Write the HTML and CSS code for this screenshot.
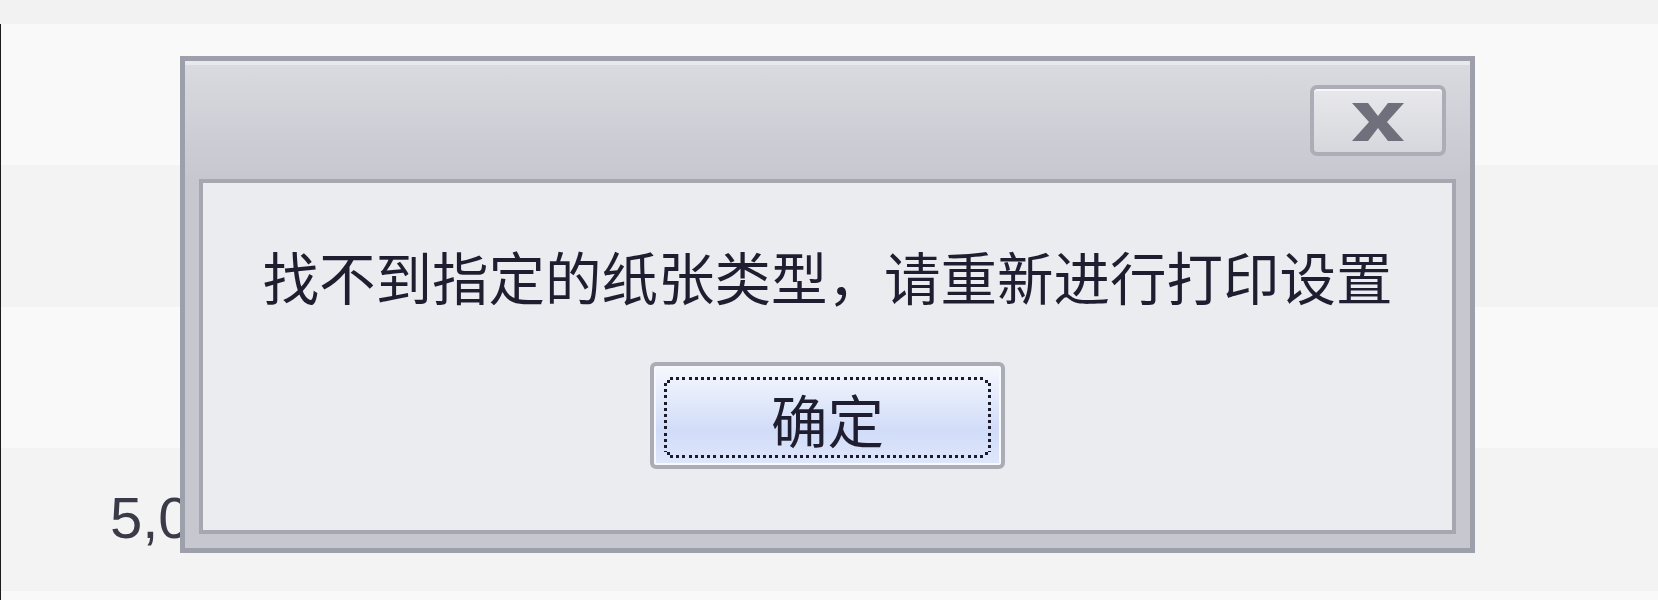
FILE: index.html
```html
<!DOCTYPE html>
<html lang="zh-CN">
<head>
    <meta charset="UTF-8">
    <meta name="viewport" content="width=device-width, initial-scale=1.0">
    <title>打印设置</title>
    <link rel="stylesheet" href="styles.css">
</head>
<body>
    <div class="sheet">
        <div class="row row-head"></div>
        <div class="row"></div>
        <div class="row alt"></div>
        <div class="row"></div>
        <div class="row alt"><span class="amount">5,000.00</span></div>
        <div class="row row-last"></div>
    </div>

    <div class="dialog">
        <div class="titlebar">
            <button class="close" type="button" aria-label="关闭">
                <svg width="52" height="38" viewBox="0 0 52 38">
                    <polygon points="0,0 16,0 26,13 36,0 52,0 35,19 52,38 36,38 26,25 16,38 0,38 17,19" fill="#6f707c"/>
                </svg>
            </button>
        </div>
        <div class="panel">
            <p class="message">找不到指定的纸张类型，请重新进行打印设置</p>
            <button class="ok" type="button"><span class="focus">确定</span></button>
        </div>
    </div>
</body>
</html>
```

FILE: styles.css
```css
body {
    margin: 0;
    height: 600px;
    overflow: hidden;
    background: #f9f9f9;
    font-family: "Noto Sans CJK SC", sans-serif;
}

.row {
    height: 141px;
    box-sizing: border-box;
    background: #f9f9f9;
    border-left: 1px solid #1c1c1c;
}

.row.alt {
    background: #f3f3f3;
}

.row-head {
    height: 24px;
    background: #f2f2f2;
    border-left: none;
}

.row:nth-child(3) {
    height: 142px;
}

.row:nth-child(5) {
    height: 143px;
}

.row-last {
    height: 9px;
}

.amount {
    display: block;
    padding: 37px 0 0 109px;
    font-family: "Liberation Sans", Arial, sans-serif;
    font-size: 58px;
    line-height: 66px;
    color: #3a3a48;
}

/* dialog */

.dialog {
    position: absolute;
    left: 180px;
    top: 56px;
    width: 1295px;
    height: 497px;
    box-sizing: border-box;
    border: 5px solid #9d9fab;
    background: linear-gradient(#dadbe0, #c6c7cf 118px, #c6c7cf);
    display: flex;
    flex-direction: column;
}

.titlebar {
    height: 118px;
    box-sizing: border-box;
    border-top: 4px solid #e8e9ec;
    padding: 20px 24px 0 0;
    display: flex;
    justify-content: flex-end;
    align-items: flex-start;
}

.close {
    width: 136px;
    height: 71px;
    box-sizing: border-box;
    padding: 2px 0 0;
    border: 4px solid #acaeb7;
    border-radius: 7px;
    background: linear-gradient(#e8e8ec, #d6d7dc);
    box-shadow: inset 0 2px 0 #f6f6f8;
    display: flex;
    align-items: center;
    justify-content: center;
}

.panel {
    flex: 1;
    margin: 0 14px 14px;
    border: 4px solid #a5a7b1;
    background: #ebecef;
    display: flex;
    flex-direction: column;
    align-items: center;
    padding-top: 60px;
}

.message {
    margin: 0;
    font-size: 56.5px;
    line-height: 64px;
    color: #1f1e31;
    white-space: nowrap;
}

.ok {
    margin-top: 55px;
    width: 355px;
    height: 107px;
    box-sizing: border-box;
    padding: 11px 10px 7px;
    border: 4px solid #abadb6;
    border-radius: 6px;
    background: linear-gradient(#f7f8fe 0%, #e2e9fb 35%, #d1dcf8 65%, #dfe7fb 100%);
    box-shadow: inset 0 0 0 2px #f8f9fe;
    display: flex;
}

/* square dotted focus rectangle, drawn per side */
.focus {
    flex: 1;
    background:
        repeating-linear-gradient(90deg, #1c1b2c 0 3px, transparent 3px 6.2px) 6px 0 / calc(100% - 12px) 3px no-repeat,
        repeating-linear-gradient(90deg, #1c1b2c 0 3px, transparent 3px 6.2px) 6px 100% / calc(100% - 12px) 3px no-repeat,
        repeating-linear-gradient(180deg, #1c1b2c 0 3px, transparent 3px 6.2px) 0 6px / 3px calc(100% - 12px) no-repeat,
        repeating-linear-gradient(180deg, #1c1b2c 0 3px, transparent 3px 6.2px) 100% 6px / 3px calc(100% - 12px) no-repeat,
        linear-gradient(#1c1b2c, #1c1b2c) 3px 3px / 3px 3px no-repeat,
        linear-gradient(#1c1b2c, #1c1b2c) calc(100% - 3px) 3px / 3px 3px no-repeat,
        linear-gradient(#1c1b2c, #1c1b2c) 3px calc(100% - 3px) / 3px 3px no-repeat,
        linear-gradient(#1c1b2c, #1c1b2c) calc(100% - 3px) calc(100% - 3px) / 3px 3px no-repeat;
    display: flex;
    align-items: center;
    justify-content: center;
    font-family: "Noto Sans CJK SC", sans-serif;
    font-size: 56.5px;
    line-height: 64px;
    color: #1f1e31;
}
```
